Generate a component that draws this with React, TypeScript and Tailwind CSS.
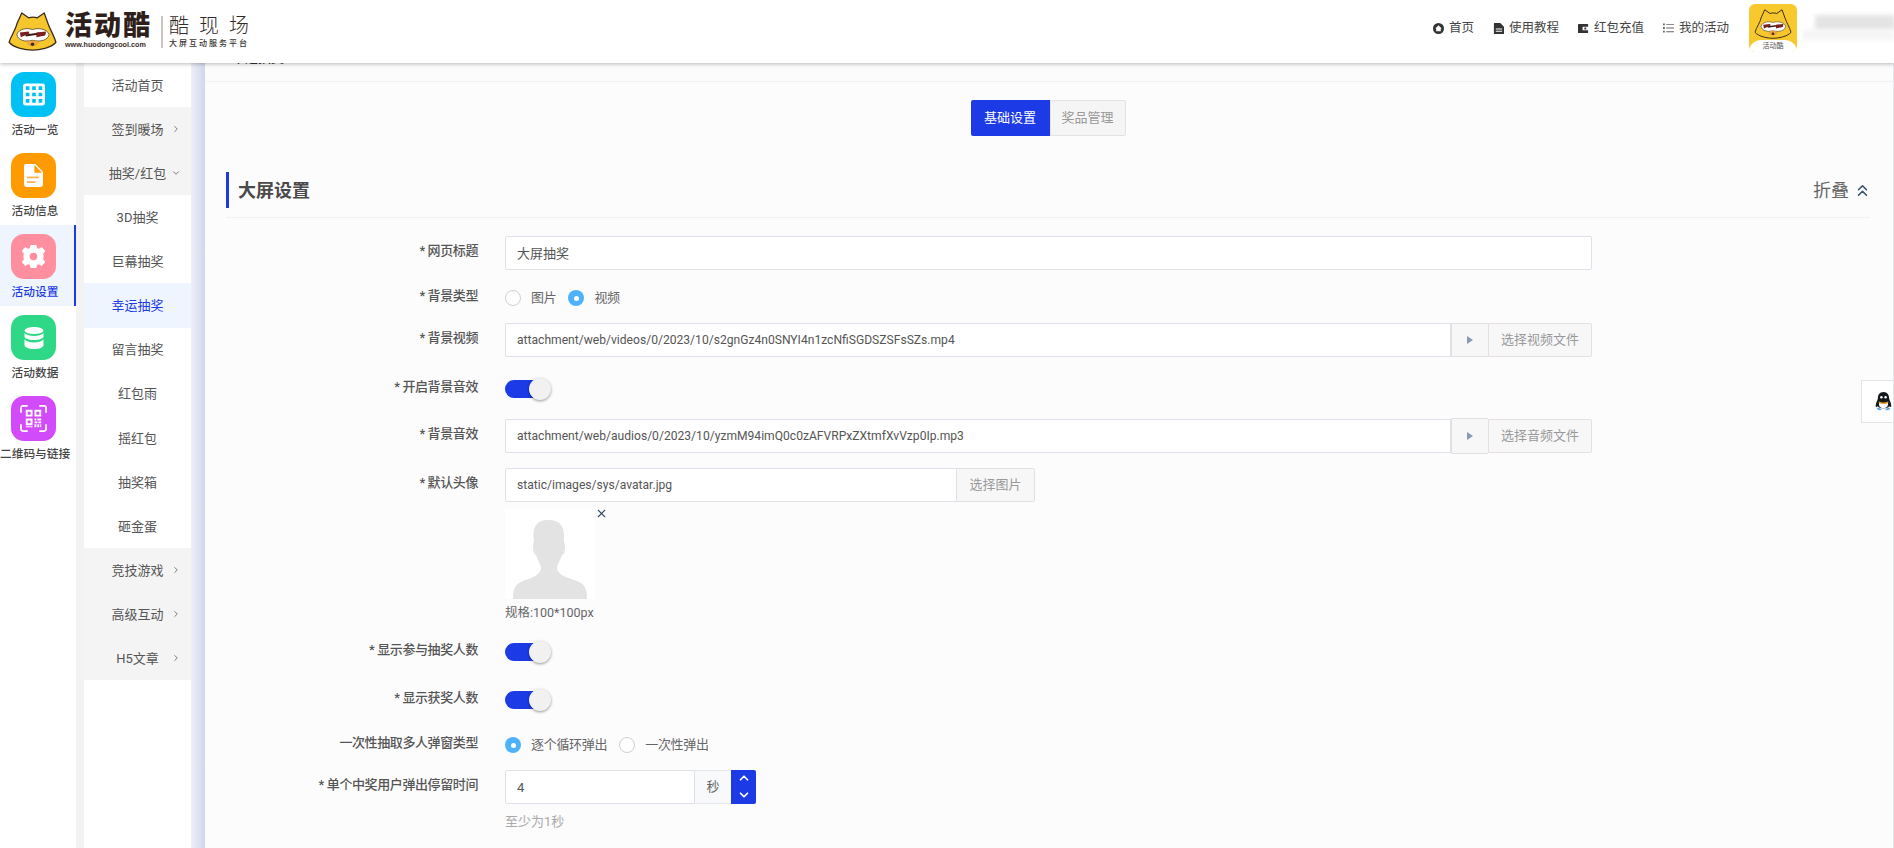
import { ChevronDown, ChevronRight, ChevronUp, ChevronsUp, X } from "lucide-react";
import type { ReactNode } from "react";

const sideItems = [
  { label: "活动一览", color: "bg-[#00c1f3]", icon: "grid" },
  { label: "活动信息", color: "bg-[#ff9b00]", icon: "doc" },
  { label: "活动设置", color: "bg-[#ff8f9f]", icon: "gear", active: true },
  { label: "活动数据", color: "bg-[#2fd886]", icon: "db" },
  { label: "二维码与链接", color: "bg-[#d24bfb]", icon: "qr" },
];

const subItems = [
  { label: "活动首页" },
  { label: "签到暖场", group: true, arrow: "right" },
  { label: "抽奖/红包", group: true, arrow: "down" },
  { label: "3D抽奖" },
  { label: "巨幕抽奖" },
  { label: "幸运抽奖", active: true },
  { label: "留言抽奖" },
  { label: "红包雨" },
  { label: "摇红包" },
  { label: "抽奖箱" },
  { label: "砸金蛋" },
  { label: "竞技游戏", group: true, arrow: "right" },
  { label: "高级互动", group: true, arrow: "right" },
  { label: "H5文章", group: true, arrow: "right" },
];

function CatFace({ className }: { className?: string }) {
  return (
    <svg viewBox="0 0 50 40" className={className}>
      <path d="M1 31C3 24 8 18 9 12L14 1L21 6C24 5 27 5 30 6L37 1L41 12C43 18 47 24 49 31C44 37 32 39 25 39C18 39 6 37 1 31Z" fill="#f6c72c" stroke="#3a2a1c" strokeWidth="1.3" strokeLinejoin="round" />
      <path d="M9 23C11 17 20 16 25 18C30 16 40 17 42 23C41 29 33 31 25 29C17 31 10 29 9 23Z" fill="#fff" stroke="#3a2a1c" strokeWidth="0.7" />
      <path d="M12 21L21 20L22 22L13 26Z" fill="#7c1f1f" />
      <path d="M18 23L32 21L32 23L18 25Z" fill="#3a1a14" />
      <path d="M29 21L39 20L38 24L29 26Z" fill="#7c1f1f" />
      <path d="M19 31C22 29 28 29 31 31C30 37 20 37 19 31Z" fill="#f2a63a" />
      <circle cx="25" cy="33" r="1.800" fill="#3a2a1c" />
    </svg>
  );
}

function SideIcon({ name }: { name: string }) {
  if (name === "grid") {
    return (
      <svg viewBox="0 0 24 24" className="h-[23px] w-[22px]" fill="#fff">
        <path fillRule="evenodd" d="M3 0H21A3 3 0 0 1 24 3V21A3 3 0 0 1 21 24H3A3 3 0 0 1 0 21V3A3 3 0 0 1 3 0ZM3 3V7H7V3ZM10 3V7H14V3ZM17 3V7H21V3ZM3 10V14H7V10ZM10 10V14H14V10ZM17 10V14H21V10ZM3 17V21H7V17ZM10 17V21H14V17ZM17 17V21H21V17Z" />
      </svg>
    );
  }
  if (name === "doc") {
    return (
      <svg viewBox="0 0 20 24" className="h-[23px] w-[19px]">
        <path d="M2 0H12L20 8V21A3 3 0 0 1 17 24H3A3 3 0 0 1 0 21V2A2 2 0 0 1 2 0Z" fill="#fff" />
        <path d="M11 1V9H19Z" fill="#ff9b00" />
        <path d="M3 13H16V15H3ZM3 18H12V20H3Z" fill="#ffb24a" />
      </svg>
    );
  }
  if (name === "gear") {
    return (
      <svg viewBox="0 0 24 24" className="h-[23px] w-[23px]">
        <path d="M9.5 0H14.5L15.2 3.4L17.600 4.500L20.600 2.600L24 6.400L21.600 9L22 11V13L21.600 15L24 17.600L20.600 21.400L17.600 19.500L15.200 20.600L14.500 24H9.500L8.800 20.600L6.400 19.500L3.400 21.400L0 17.600L2.400 15L2 13V11L2.400 9L0 6.400L3.400 2.600L6.400 4.500L8.800 3.400Z" fill="#fff" stroke="#fff" strokeWidth="1" strokeLinejoin="round" />
        <circle cx="12" cy="12" r="4" fill="#ff8f9f" />
      </svg>
    );
  }
  if (name === "db") {
    return (
      <svg viewBox="0 0 20 22" className="h-[22px] w-[20px]" fill="#fff">
        <ellipse cx="10" cy="3.500" rx="9.500" ry="3.500" />
        <path d="M0.500 6C2 8 6 9 10 9S18 8 19.500 6V9.500C19.500 11.500 15 13 10 13S0.500 11.500 0.500 9.500Z" />
        <path d="M0.500 12.500C2 14.500 6 15.500 10 15.500S18 14.500 19.500 12.500V18C19.500 20.500 15 22 10 22S0.500 20.500 0.500 18Z" />
      </svg>
    );
  }
  return (
    <svg viewBox="0 0 28 28" className="h-[27px] w-[27px]">
      <path d="M1 8V3A2 2 0 0 1 3 1H8M20 1H25A2 2 0 0 1 27 3V8M27 20V25A2 2 0 0 1 25 27H20M8 27H3A2 2 0 0 1 1 25V20" fill="none" stroke="#fff" strokeWidth="1.800" />
      <path fill="#fff" fillRule="evenodd" d="M6 5H13V12H6ZM8 7V10H11V7ZM15 5H22V12H15ZM17 7V10H20V7ZM6 14H13V21H6ZM8 16V19H11V16ZM15 14H17V16H15ZM18 14H22V16H18ZM15 17H18V19H15ZM19 17H22V19H19ZM15 20H17V23H15ZM18 20H20V23H18ZM21 20H22V23H21ZM6 22H13V23H6Z" />
    </svg>
  );
}

function NavLink({ icon, label }: { icon: ReactNode; label: string }) {
  return (
    <a className="flex items-center gap-[5px] text-[12.500px] text-[#444]">
      {icon}
      <span>{label}</span>
    </a>
  );
}

function Header() {
  return (
    <header className="relative z-10 flex h-[63px] items-center justify-between bg-white shadow-[0_1px_4px_rgba(0,0,0,0.28)]">
      <div className="flex items-center pl-[8px]">
        <CatFace className="h-[39px] w-[49px]" />
        <div className="ml-[8px] flex w-[89px] flex-col">
          <span className="h-[24px] text-[27px] leading-[24px] font-black tracking-[2px] whitespace-nowrap text-[#2f1f1a]">活动酷</span>
          <span className="mt-[2px] font-['Liberation_Sans',sans-serif] text-[7.200px] leading-[9px] font-bold whitespace-nowrap text-[#3a2c26]">www.huodongcool.com</span>
        </div>
        <div className="ml-[7px] h-[32px] w-[2px] bg-[#c9c6c2]" />
        <div className="ml-[6px] flex flex-col">
          <span className="h-[24px] text-[20px] leading-[24px] font-light tracking-[10px] whitespace-nowrap text-[#2f2a28]">酷现场</span>
          <span className="mt-[1px] text-[8px] leading-[10px] font-medium tracking-[2px] whitespace-nowrap text-[#3a3532]">大屏互动服务平台</span>
        </div>
      </div>
      <div className="flex items-center pb-[7px]">
        <nav className="flex items-center gap-[19px]">
          <NavLink
            label="首页"
            icon={
              <svg viewBox="0 0 12 12" className="h-[11px] w-[11px]">
                <circle cx="6" cy="6" r="6" fill="#333" />
                <path d="M6 2.500L9.500 6H8.500V9H3.500V6H2.500Z" fill="#fff" />
              </svg>
            }
          />
          <NavLink
            label="使用教程"
            icon={
              <svg viewBox="0 0 12 12" className="h-[11px] w-[11px]">
                <path d="M1 0H8L12 4V12H1Z" fill="#333" />
                <path d="M3 6H10V7H3ZM3 8.500H10V9.500H3Z" fill="#fff" />
              </svg>
            }
          />
          <NavLink
            label="红包充值"
            icon={
              <svg viewBox="0 0 12 12" className="h-[11px] w-[11px]">
                <path fillRule="evenodd" d="M1 1H11V11H1A1 1 0 0 1 0 10V2A1 1 0 0 1 1 1ZM5 4V8H11V4ZM7 5H9V7H7Z" fill="#333" />
              </svg>
            }
          />
          <NavLink
            label="我的活动"
            icon={
              <svg viewBox="0 0 12 10" className="h-[10px] w-[11px]" fill="#666">
                <path d="M0 0H2V2H0ZM3.500 .5H12V1.500H3.500ZM0 4H2V6H0ZM3.500 4.500H12V5.500H3.500ZM0 8H2V10H0ZM3.500 8.500H12V9.500H3.500Z" />
              </svg>
            }
          />
        </nav>
        <div className="ml-[20px] flex h-[48px] w-[48px] flex-col items-center overflow-hidden rounded-[6px] bg-[#f8c92c] pt-[5px]">
          <CatFace className="h-[31px] w-[40px]" />
          <span className="mt-[1px] h-[12px] w-full rounded-t-[14px] bg-white text-center text-[7px] leading-[12px] text-[#555]">活动酷</span>
        </div>
        <div className="ml-[5px] h-[48px] w-[92px] overflow-hidden pt-[11px]">
          <div className="ml-[13px] h-[15px] w-[80px] bg-[#e4e4e4] blur-[2px]" />
          <div className="h-[10px] w-[92px] bg-[#f5f5f5] blur-[2px]" />
        </div>
      </div>
    </header>
  );
}

function Sidebar() {
  return (
    <aside className="w-[76px] shrink-0 bg-white">
      {sideItems.map((item) => (
        <div
          key={item.label}
          className={
            item.active
              ? "flex h-[81px] flex-col border-r-2 border-[#1c3ae6] bg-[#eef5fe] pt-[9px]"
              : "flex h-[81px] flex-col pt-[9px]"
          }
        >
          <div className={`ml-[11px] flex h-[45px] w-[45px] shrink-0 items-center justify-center rounded-[13px] ${item.color}`}>
            <SideIcon name={item.icon} />
          </div>
          <span
            className={
              item.active
                ? "mt-[3px] w-[70px] text-center text-[11.700px] leading-[20px] font-medium whitespace-nowrap text-[#1c3ae6]"
                : "mt-[3px] w-[70px] text-center text-[11.700px] leading-[20px] font-medium whitespace-nowrap text-[#444]"
            }
          >
            {item.label}
          </span>
        </div>
      ))}
    </aside>
  );
}

function SubMenu() {
  return (
    <div className="w-[107px] shrink-0 bg-white">
      {subItems.map((item) => (
        <div
          key={item.label}
          className={
            item.active
              ? "grid h-[44.100px] grid-cols-[1fr_auto_1fr] items-center bg-[#eef5fe] text-[13px] text-[#1c3ae6]"
              : item.group
                ? "grid h-[44.100px] grid-cols-[1fr_auto_1fr] items-center bg-[#f4f4f4] text-[13px] text-[#555]"
                : "grid h-[44.100px] grid-cols-[1fr_auto_1fr] items-center bg-white text-[13px] text-[#555]"
          }
        >
          <span className="col-start-2 pt-[1px]">{item.label}</span>
          {item.arrow === "right" && <ChevronRight className="mr-[10px] h-[10px] w-[10px] justify-self-end text-[#666]" strokeWidth={2} />}
          {item.arrow === "down" && <ChevronDown className="mr-[10px] h-[10px] w-[10px] justify-self-end text-[#666]" strokeWidth={2} />}
        </div>
      ))}
    </div>
  );
}

function Row({ label, className, children }: { label: string; className: string; children: ReactNode }) {
  return (
    <div className={`flex ${className}`}>
      <label className="flex w-[273px] shrink-0 items-center justify-end pb-[5px] text-[13px] font-medium tracking-[-0.4px] whitespace-nowrap text-[#555]">{label}</label>
      <div className="ml-[27px] flex min-w-0 items-center">{children}</div>
    </div>
  );
}

function TextBox({ value, className }: { value: string; className: string }) {
  return (
    <div className={`flex h-[34px] items-center rounded-l-[2px] border border-[#dfe1ea] bg-white pt-[1px] pl-[11px] whitespace-nowrap text-[#555] ${className}`}>{value}</div>
  );
}

function Radio({ checked, label }: { checked?: boolean; label: string }) {
  return (
    <div className="flex items-center gap-[10px] text-[13px] tracking-[-0.3px] text-[#666]">
      {checked ? (
        <span className="flex h-[16px] w-[16px] items-center justify-center rounded-full bg-[#4db2fb]">
          <span className="h-[5px] w-[5px] rounded-full bg-white" />
        </span>
      ) : (
        <span className="h-[16px] w-[16px] rounded-full border border-[#cfcfcf] bg-white" />
      )}
      <span>{label}</span>
    </div>
  );
}

function Toggle() {
  return (
    <div className="flex h-[22px] w-[47px] items-center">
      <div className="h-[18px] w-[43px] rounded-full bg-[#1c3ae6]" />
      <div className="-ml-[19px] h-[22px] w-[22px] shrink-0 rounded-full bg-[#f1f1f1] shadow-[0_1px_3px_rgba(0,0,0,0.4)]" />
    </div>
  );
}

function MediaInput({ value, button, tall }: { value: string; button: string; tall?: boolean }) {
  return (
    <div className="flex h-[34px] w-[1087px]">
      <TextBox value={value} className="w-[946px] text-[12.100px]" />
      <div
        className={
          tall
            ? "-my-[1px] flex h-[36px] w-[37px] items-center justify-center border border-r-0 border-[#e6dfe2] bg-[#f7f7f8]"
            : "flex w-[37px] items-center justify-center border-y border-l border-[#e6dfe2] bg-[#f7f7f8]"
        }
      >
        <span className="h-0 w-0 border-y-[4px] border-l-[6px] border-y-transparent border-l-[#8a9bb0]" />
      </div>
      <div className="flex w-[104px] items-center justify-center rounded-r-[2px] border border-[#e6dfe2] bg-[#f7f7f8] text-[13px] text-[#999]">{button}</div>
    </div>
  );
}

function Form() {
  return (
    <div>
      <Row label="* 网页标题" className="mt-[18px] h-[34px]">
        <TextBox value="大屏抽奖" className="w-[1087px] rounded-r-[2px] text-[13px]" />
      </Row>
      <Row label="* 背景类型" className="mt-[19px] h-[18px]">
        <div className="flex items-center gap-[12px]">
          <Radio label="图片" />
          <Radio checked label="视频" />
        </div>
      </Row>
      <Row label="* 背景视频" className="mt-[16px] h-[34px]">
        <MediaInput value="attachment/web/videos/0/2023/10/s2gnGz4n0SNYI4n1zcNfiSGDSZSFsSZs.mp4" button="选择视频文件" />
      </Row>
      <Row label="* 开启背景音效" className="mt-[21px] h-[22px]">
        <Toggle />
      </Row>
      <Row label="* 背景音效" className="mt-[19px] h-[34px]">
        <MediaInput tall value="attachment/web/audios/0/2023/10/yzmM94imQ0c0zAFVRPxZXtmfXvVzp0Ip.mp3" button="选择音频文件" />
      </Row>
      <Row label="* 默认头像" className="mt-[15px] h-[34px]">
        <div className="flex h-[34px] w-[530px]">
          <TextBox value="static/images/sys/avatar.jpg" className="w-[452px] text-[12.100px]" />
          <div className="flex w-[78px] items-center justify-center rounded-r-[2px] border border-l-0 border-[#e6dfe2] bg-[#f7f7f8] text-[13px] text-[#999]">选择图片</div>
        </div>
      </Row>
      <div className="mt-[7px] ml-[300px]">
        <div className="relative h-[90px] w-[90px] bg-white">
          <svg viewBox="0 0 90 90" className="h-[90px] w-[90px]" fill="#e3e3e3">
            <path d="M8 90C8 80 10 76 16 73C24 69 34 68 36 60C36 55 33 52 31 46C29 46 28 42 28 38C28 36 28 34 29 33C27 18 31 11 43 11C56 11 60 18 59 33C60 34 60 36 60 38C60 42 59 46 57 46C55 52 52 55 52 60C54 68 66 69 74 73C80 76 82 80 82 90Z" />
          </svg>
          <X className="absolute -top-[2px] -right-[13px] h-[13px] w-[13px] text-[#34506b]" strokeWidth={2} />
        </div>
        <p className="mt-[5px] text-[12.500px] leading-[18px] text-[#666]">规格:100*100px</p>
      </div>
      <Row label="* 显示参与抽奖人数" className="mt-[19px] h-[22px]">
        <Toggle />
      </Row>
      <Row label="* 显示获奖人数" className="mt-[26px] h-[22px]">
        <Toggle />
      </Row>
      <Row label="一次性抽取多人弹窗类型" className="mt-[25px] h-[18px]">
        <div className="flex items-center gap-[12px]">
          <Radio checked label="逐个循环弹出" />
          <Radio label="一次性弹出" />
        </div>
      </Row>
      <Row label="* 单个中奖用户弹出停留时间" className="mt-[16px] h-[34px]">
        <div className="flex h-[34px] w-[251px]">
          <TextBox value="4" className="w-[190px] text-[13px]" />
          <div className="flex w-[36px] items-center justify-center border-y border-[#e6e7ee] bg-[#f8f9fb] text-[13px] text-[#666]">秒</div>
          <div className="flex w-[25px] flex-col items-center justify-between rounded-r-[2px] bg-[#1c3ae6] pt-[1px] pb-[2px] text-white">
            <ChevronUp className="h-[14px] w-[14px]" strokeWidth={3} />
            <ChevronDown className="h-[14px] w-[14px]" strokeWidth={3} />
          </div>
        </div>
      </Row>
      <p className="mt-[9px] ml-[300px] text-[13px] leading-[18px] text-[#aaa]">至少为1秒</p>
    </div>
  );
}

function Main() {
  return (
    <main className="relative min-w-0 flex-1 overflow-hidden border-r border-[#e4e6f0] bg-[#fcfcfd]">
      <div className="h-[19px] overflow-hidden border-b border-[#f1f1f3] pl-[27px]">
        <p className="-mt-[12px] text-[13px] leading-[14px] font-medium text-[#333]">幸运抽奖</p>
      </div>
      <div className="mt-[18px] flex justify-center pr-[2px]">
        <button className="h-[36px] w-[79px] rounded-l-[2px] bg-[#1c3ae6] text-[13px] text-white">基础设置</button>
        <button className="h-[36px] w-[76px] rounded-r-[2px] border border-[#e2e2e2] bg-[#f5f5f5] text-[13px] text-[#999]">奖品管理</button>
      </div>
      <div className="mt-[36px] mr-[23px] ml-[21px] flex h-[46px] items-start justify-between border-b border-[#f1f1f3]">
        <h2 className="flex h-[36px] items-center border-l-[3px] border-[#1c3ae6] pl-[9px] text-[18px] font-bold text-[#4a4a4a]">大屏设置</h2>
        <button className="flex h-[36px] items-center gap-[9px] pr-[3px] text-[18px] text-[#666]">
          折叠
          <ChevronsUp className="-mx-[5px] h-[19px] w-[19px] text-[#34506b]" strokeWidth={2} />
        </button>
      </div>
      <Form />
      <div className="absolute top-[317px] right-0 flex h-[43px] w-[32px] items-center justify-end border-y border-l border-[#e4e4e8] bg-white pr-[1px]">
        <svg viewBox="0 0 18 20" className="h-[19px] w-[17px]">
          <path d="M9 0C13 0 15 3 15 7C16 10 18 13 17 16L15 15C14 18 4 18 3 15L1 16C0 13 2 10 3 7C3 3 5 0 9 0Z" fill="#15181d" />
          <path d="M4.500 11C7 12.500 11 12.500 13.500 11C14.500 14 13 17 9 17C5 17 3.500 14 4.500 11Z" fill="#fff" />
          <path d="M4 10C7 11.500 11 11.500 14 10L14 11.500C11 13 7 13 4 11.500Z" fill="#f0a020" />
          <path d="M2 17C3 16 6 17 7 19C5 20 2 19 2 17ZM16 17C15 16 12 17 11 19C13 20 16 19 16 17Z" fill="#5ba7e6" />
          <circle cx="6.800" cy="5.500" r="1.300" fill="#fff" />
          <circle cx="11.200" cy="5.500" r="1.300" fill="#fff" />
        </svg>
      </div>
    </main>
  );
}

export default function App() {
  return (
    <div className="flex h-[848px] flex-col overflow-hidden bg-white font-['Roboto','Noto_Sans_CJK_SC',sans-serif]">
      <Header />
      <div className="flex min-h-0 flex-1">
        <Sidebar />
        <div className="w-[8px] shrink-0 bg-[#f3f3f3]" />
        <SubMenu />
        <div className="w-[14px] shrink-0 bg-gradient-to-r from-[#eef0f7] to-[#d0d7ec]" />
        <Main />
      </div>
    </div>
  );
}
